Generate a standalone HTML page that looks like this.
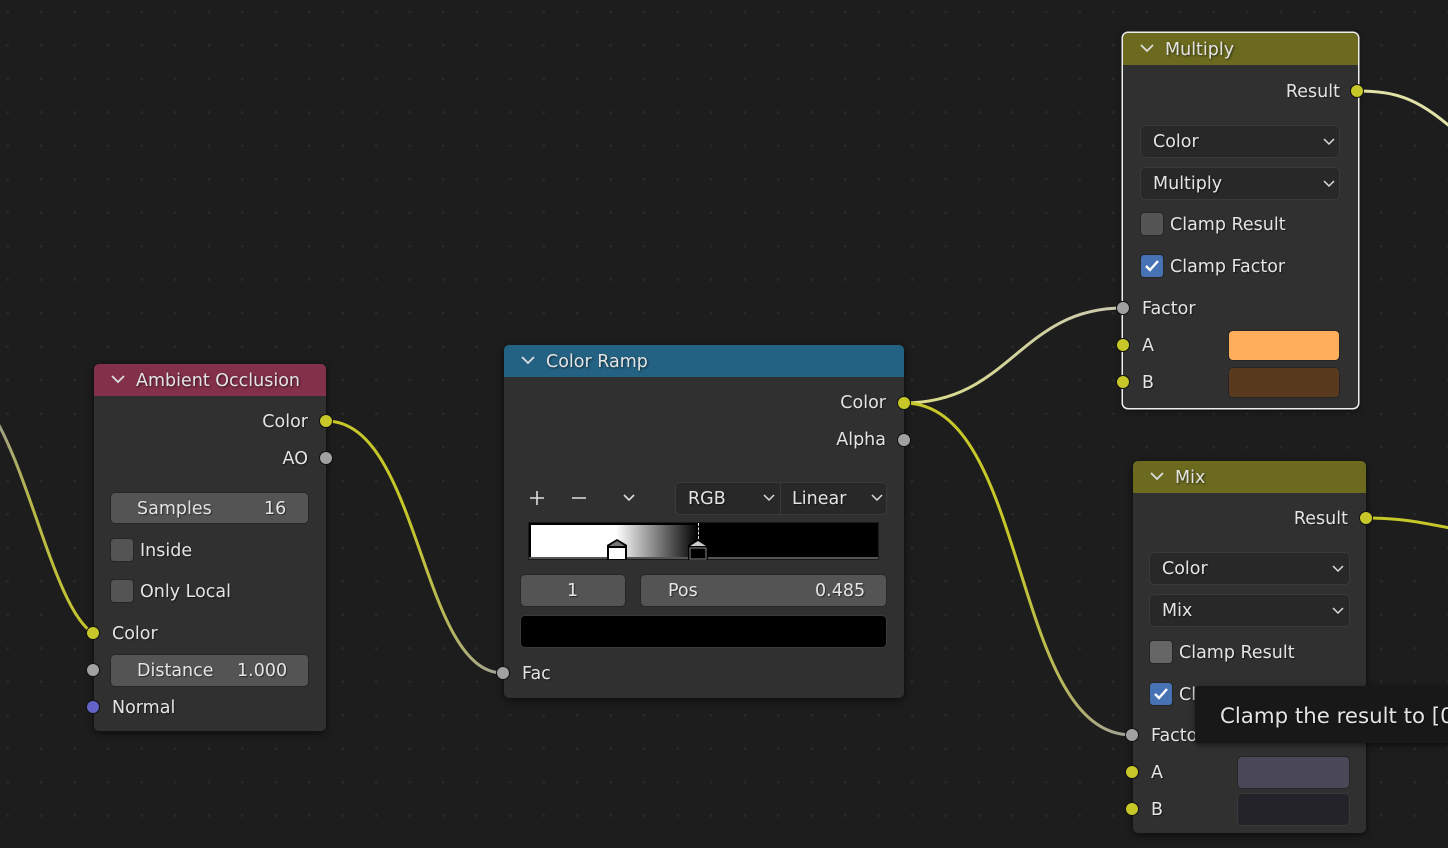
<!DOCTYPE html>
<html><head><meta charset="utf-8"><style>
*{box-sizing:border-box;margin:0;padding:0}
body{width:1448px;height:848px;overflow:hidden;background:#1d1d1d;position:relative;font-family:"DejaVu Sans","Liberation Sans",sans-serif;color:#e4e4e4;font-size:17.5px}
.grid{position:absolute;left:0;top:0;width:1448px;height:848px;background-image:radial-gradient(circle,#2a2a2a 1.2px,transparent 1.6px);background-size:33.5px 33.5px;background-position:-9px -5px}
.node{position:absolute;background:#303030;border-radius:5px;box-shadow:0 2px 8px rgba(0,0,0,.6)}
.hdr{position:absolute;left:0;right:0;top:0;border-radius:5px 5px 0 0;padding-left:42px;line-height:34px;height:32px;text-shadow:1px 1px 2px rgba(0,0,0,.6)}
.chev{position:absolute;left:16px;top:9px;width:16px;height:12px}
.t{position:absolute;white-space:nowrap;line-height:20px;margin-top:1px;text-shadow:1px 1px 1px rgba(0,0,0,.5)}
.r{text-align:right}
.fld{position:absolute;background:#545454;border-radius:4px;box-shadow:0 0 0 1px #262626}
.dd{position:absolute;background:#282828;border-radius:4px;box-shadow:0 0 0 1px #3a3a3a}
.cb{position:absolute;width:22px;height:22px;background:#545454;border-radius:3px;box-shadow:0 0 0 1px #262626}
.cb.on{background:#4772b3}
.sock{position:absolute;width:14px;height:14px;border-radius:50%;border:1px solid #111;margin:-7px 0 0 -7px}
.y{background:#c7c729}.g{background:#a1a1a1}.b{background:#6363c7}
</style></head><body>
<div class="grid"></div>
<svg width="1448" height="848" style="position:absolute;left:0;top:0" fill="none" stroke-width="3">
<defs>
<linearGradient id="g1" x1="0" y1="0" x2="1" y2="0"><stop offset="0" stop-color="#999"/><stop offset="0.4" stop-color="#b8b84a"/><stop offset="1" stop-color="#c7c729"/></linearGradient>
<linearGradient id="g2" x1="0" y1="0" x2="1" y2="0"><stop offset="0" stop-color="#c7c729"/><stop offset="0.45" stop-color="#c7c729"/><stop offset="1" stop-color="#a1a1a1"/></linearGradient>
<linearGradient id="g3" x1="0" y1="0" x2="1" y2="0"><stop offset="0" stop-color="#dede88"/><stop offset="1" stop-color="#c8c8b0"/></linearGradient>
</defs>
<path d="M-10 410 C30 470 55 610 93 633" stroke="url(#g1)"/>
<path d="M326 421 C420 421 420 673 503 673" stroke="url(#g2)"/>
<path d="M904 403 C1010 403 1020 308 1123 308" stroke="url(#g3)"/>
<path d="M904 403 C1030 403 1010 735 1132 735" stroke="url(#g2)"/>
<path d="M1357 91 C1400 91 1420 100 1460 135" stroke="#e2e2a8"/>
<path d="M1366 518 C1400 518 1420 522 1460 530" stroke="#c7c729"/>
</svg>

<!-- Ambient Occlusion -->
<div class="node" style="left:94px;top:364px;width:232px;height:367px">
<div class="hdr" style="background:#83304a">Ambient Occlusion</div>
<svg class="chev" viewBox="0 0 16 12"><path d="M2 3l6 6 6-6" stroke="#ddd" stroke-width="1.8" fill="none"/></svg>
<div class="fld" style="left:17px;top:129px;width:197px;height:30px"></div>
<div class="t" style="left:43px;top:134px">Samples</div><div class="t" style="left:170px;top:134px">16</div>
<div class="cb" style="left:17px;top:175px"></div><div class="t" style="left:46px;top:176px">Inside</div>
<div class="cb" style="left:17px;top:216px"></div><div class="t" style="left:46px;top:217px">Only Local</div>
<div class="t" style="left:18px;top:259px">Color</div>
<div class="fld" style="left:17px;top:291px;width:197px;height:31px"></div>
<div class="t" style="left:43px;top:296px">Distance</div><div class="t" style="left:143px;top:296px">1.000</div>
<div class="t" style="left:18px;top:333px">Normal</div>
<div class="t r" style="right:18px;top:47px">Color</div>
<div class="t r" style="right:18px;top:84px">AO</div>
</div>

<!-- Color Ramp -->
<div class="node" style="left:504px;top:345px;width:400px;height:353px">
<div class="hdr" style="background:#246283">Color Ramp</div>
<svg class="chev" viewBox="0 0 16 12"><path d="M2 3l6 6 6-6" stroke="#ddd" stroke-width="1.8" fill="none"/></svg>
<div class="t r" style="right:18px;top:47px">Color</div>
<div class="t r" style="right:18px;top:84px">Alpha</div>
<svg style="position:absolute;left:24px;top:144px" width="120" height="18"><path d="M2 9h14M9 2v14M44 9h14" stroke="#ddd" stroke-width="1.6" fill="none"/><path d="M96 6l5 5 5-5" stroke="#ddd" stroke-width="1.6" fill="none"/></svg>
<div class="dd" style="left:172px;top:138px;width:210px;height:31px"></div>
<div style="position:absolute;left:276px;top:138px;width:1px;height:31px;background:#3a3a3a"></div>
<div class="t" style="left:184px;top:143px">RGB</div><div class="t" style="left:288px;top:143px">Linear</div>
<svg style="position:absolute;left:258px;top:148px" width="14" height="10"><path d="M2 2l5 5 5-5" stroke="#ddd" stroke-width="1.5" fill="none"/></svg>
<svg style="position:absolute;left:366px;top:148px" width="14" height="10"><path d="M2 2l5 5 5-5" stroke="#ddd" stroke-width="1.5" fill="none"/></svg>
<div style="position:absolute;left:25px;top:178px;width:349px;height:36px;background:#000;box-shadow:0 0 0 1px #1a1a1a"></div>
<div style="position:absolute;left:27px;top:180px;width:167px;height:32px;background:linear-gradient(to right,#fff 0,#fff 85px,#000 167px)"></div>
<div style="position:absolute;left:25px;top:212px;width:349px;height:2px;background:#555"></div>
<div style="position:absolute;left:194px;top:178px;width:0;height:16px;border-left:1px dashed #ddd"></div>
<svg style="position:absolute;left:101px;top:192px" width="24" height="26"><path d="M2 8l10-6 10 6v15H2z" fill="#000"/><path d="M4 9l8-5 8 5z" fill="#777"/><rect x="4" y="11" width="16" height="11" fill="#fff"/></svg>
<svg style="position:absolute;left:182px;top:192px" width="24" height="26"><path d="M2 8l10-6 10 6v15H2z" fill="#000"/><path d="M4 9l8-5 8 5z" fill="#ccc"/><rect x="4" y="11" width="16" height="11" fill="#000" stroke="#888"/></svg>
<div class="fld" style="left:17px;top:230px;width:104px;height:31px"></div><div class="t" style="left:63px;top:235px">1</div>
<div class="fld" style="left:137px;top:230px;width:245px;height:31px"></div>
<div class="t" style="left:164px;top:235px">Pos</div><div class="t" style="left:311px;top:235px">0.485</div>
<div style="position:absolute;left:17px;top:271px;width:365px;height:31px;background:#000;border-radius:4px;box-shadow:0 0 0 1px #3a3a3a"></div>
<div class="t" style="left:18px;top:318px">Fac</div>
</div>

<!-- Multiply -->
<div class="node" style="left:1123px;top:33px;width:235px;height:375px;box-shadow:0 0 0 1.5px #eee,0 2px 8px rgba(0,0,0,.6)">
<div class="hdr" style="background:#6b6a1f">Multiply</div>
<svg class="chev" viewBox="0 0 16 12"><path d="M2 3l6 6 6-6" stroke="#ddd" stroke-width="1.8" fill="none"/></svg>
<div class="t r" style="right:18px;top:48px">Result</div>
<div class="dd" style="left:18px;top:93px;width:198px;height:31px"></div><div class="t" style="left:30px;top:98px">Color</div>
<svg style="position:absolute;left:199px;top:104px" width="14" height="10"><path d="M2 2l5 5 5-5" stroke="#ddd" stroke-width="1.5" fill="none"/></svg>
<div class="dd" style="left:18px;top:135px;width:198px;height:31px"></div><div class="t" style="left:30px;top:140px">Multiply</div>
<svg style="position:absolute;left:199px;top:146px" width="14" height="10"><path d="M2 2l5 5 5-5" stroke="#ddd" stroke-width="1.5" fill="none"/></svg>
<div class="cb" style="left:18px;top:180px"></div><div class="t" style="left:47px;top:181px">Clamp Result</div>
<div class="cb on" style="left:18px;top:222px"><svg width="22" height="22"><path d="M5 11l4 4 8-9" stroke="#fff" stroke-width="2.4" fill="none"/></svg></div><div class="t" style="left:47px;top:223px">Clamp Factor</div>
<div class="t" style="left:19px;top:265px">Factor</div>
<div class="t" style="left:19px;top:302px">A</div>
<div style="position:absolute;left:106px;top:298px;width:110px;height:29px;background:#ffae5c;border-radius:4px;box-shadow:0 0 0 1px #262626"></div>
<div class="t" style="left:19px;top:339px">B</div>
<div style="position:absolute;left:106px;top:335px;width:110px;height:29px;background:#5a3a1e;border-radius:4px;box-shadow:0 0 0 1px #262626"></div>
</div>

<!-- Mix -->
<div class="node" style="left:1133px;top:461px;width:233px;height:372px">
<div class="hdr" style="background:#6b6a1f">Mix</div>
<svg class="chev" viewBox="0 0 16 12"><path d="M2 3l6 6 6-6" stroke="#ddd" stroke-width="1.8" fill="none"/></svg>
<div class="t r" style="right:18px;top:47px">Result</div>
<div class="dd" style="left:17px;top:92px;width:199px;height:31px"></div><div class="t" style="left:29px;top:97px">Color</div>
<svg style="position:absolute;left:198px;top:103px" width="14" height="10"><path d="M2 2l5 5 5-5" stroke="#ddd" stroke-width="1.5" fill="none"/></svg>
<div class="dd" style="left:17px;top:134px;width:199px;height:31px"></div><div class="t" style="left:29px;top:139px">Mix</div>
<svg style="position:absolute;left:198px;top:145px" width="14" height="10"><path d="M2 2l5 5 5-5" stroke="#ddd" stroke-width="1.5" fill="none"/></svg>
<div class="cb" style="left:17px;top:180px;background:#666"></div><div class="t" style="left:46px;top:181px">Clamp Result</div>
<div class="cb on" style="left:17px;top:222px"><svg width="22" height="22"><path d="M5 11l4 4 8-9" stroke="#fff" stroke-width="2.4" fill="none"/></svg></div><div class="t" style="left:46px;top:223px">Cl</div>
<div class="t" style="left:18px;top:264px">Factor</div>
<div class="t" style="left:18px;top:301px">A</div>
<div style="position:absolute;left:105px;top:296px;width:111px;height:31px;background:#4a4858;border-radius:4px;box-shadow:0 0 0 1px #262626"></div>
<div class="t" style="left:18px;top:338px">B</div>
<div style="position:absolute;left:105px;top:333px;width:111px;height:31px;background:#242329;border-radius:4px;box-shadow:0 0 0 1px #3a3a3a"></div>
</div>

<!-- sockets -->
<div class="sock y" style="left:326px;top:421px"></div>
<div class="sock g" style="left:326px;top:458px"></div>
<div class="sock y" style="left:93px;top:633px"></div>
<div class="sock g" style="left:93px;top:670px"></div>
<div class="sock b" style="left:93px;top:707px"></div>
<div class="sock y" style="left:904px;top:403px"></div>
<div class="sock g" style="left:904px;top:440px"></div>
<div class="sock g" style="left:503px;top:673px"></div>
<div class="sock y" style="left:1357px;top:91px"></div>
<div class="sock g" style="left:1123px;top:308px"></div>
<div class="sock y" style="left:1123px;top:345px"></div>
<div class="sock y" style="left:1123px;top:382px"></div>
<div class="sock y" style="left:1366px;top:518px"></div>
<div class="sock g" style="left:1132px;top:735px"></div>
<div class="sock y" style="left:1132px;top:772px"></div>
<div class="sock y" style="left:1132px;top:809px"></div>

<!-- tooltip -->
<div style="position:absolute;left:1195px;top:686px;width:260px;height:57px;background:#181818;border-radius:4px;box-shadow:0 2px 6px rgba(0,0,0,.5)">
<div class="t" style="left:25px;top:17px;font-size:21.3px;line-height:26px">Clamp the result to [0</div>
</div>
</body></html>
